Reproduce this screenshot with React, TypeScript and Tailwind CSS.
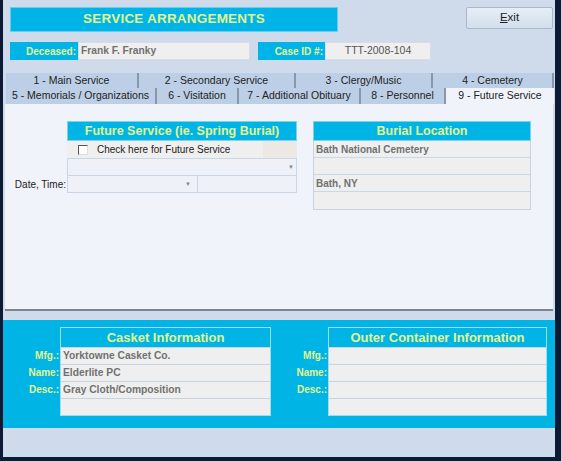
import React from 'react';

const font = { fontFamily: '"Liberation Sans", Arial, sans-serif' };

const topTabs = [
  { label: '1 - Main Service', w: 'w-[133px]' },
  { label: '2 - Secondary Service', w: 'w-[157px]' },
  { label: '3 - Clergy/Music', w: 'w-[137px]' },
  { label: '4 - Cemetery', w: 'w-[121px]' },
];

const bottomTabs = [
  { label: '5 - Memorials / Organizations', w: 'w-[151px]', active: false },
  { label: '6 - Visitation', w: 'w-[82px]', active: false },
  { label: '7 - Additional Obituary', w: 'w-[122px]', active: false },
  { label: '8 -  Personnel', w: 'w-[85px]', active: false },
  { label: '9 - Future Service', w: 'w-[108px]', active: true },
];

function Header({ children }: { children: React.ReactNode }) {
  return (
    <div className="h-[20px] bg-[#00b4e6] flex items-center justify-center text-[12.5px] font-bold text-[#e2f48e] border border-[#7fd2ee]">
      {children}
    </div>
  );
}

function Arrow() {
  return <span className="text-[6px] text-[#888] leading-none">▼</span>;
}

function InfoBox({ title, rows, boxW }: { title: string; rows: string[]; boxW: string }) {
  const labels = ['Mfg.:', 'Name:', 'Desc.:', ''];
  return (
    <div className="flex items-start">
      <div className="w-[57px] flex flex-col pt-[20px]">
        {labels.map((l, i) => (
          <div key={i} className="h-[17px] flex items-center justify-end pr-[1px] text-[10px] font-bold text-[#e2f48e]">
            {l}
          </div>
        ))}
      </div>
      <div className={`${boxW} border border-[#9fdcf2] bg-[#00b4e6]`}>
        <div className="h-[19px] flex items-center justify-center text-[13px] font-bold text-[#e2f48e]">{title}</div>
        {rows.map((r, i) => (
          <div
            key={i}
            className="h-[17px] bg-[#efefef] border-t border-[#c9d3de] flex items-center px-[2px] text-[10.25px] font-bold text-[#717171]"
          >
            {r}
          </div>
        ))}
      </div>
    </div>
  );
}

export default function App() {
  return (
    <div className="w-[561px] h-[461px] bg-[#0d1a33] flex pl-[3px] pr-[6px] pb-[4px] overflow-hidden" style={font}>
      <div className="flex-1 bg-[#cfdbea] flex flex-col">
        {/* title row */}
        <div className="flex pt-[7px] pr-[2px]">
          <div className="ml-[7px] w-[328px] h-[25px] bg-[#00b4e8] border border-[#66cdef] flex items-center justify-center text-[13.5px] font-bold text-[#e2f48e] tracking-[0.2px]">
            SERVICE ARRANGEMENTS
          </div>
          <button className="ml-auto w-[87px] h-[22px] bg-gradient-to-b from-[#e6eef7] to-[#d3dfec] border border-[#a9b9cb] rounded-[2px] text-[11.5px] text-[#1d1d1d] flex items-center justify-center">
            <span className="underline">E</span>xit
          </button>
        </div>

        {/* deceased row */}
        <div className="flex mt-[10px] h-[18px] items-stretch">
          <div className="ml-[7px] w-[68px] bg-[#00b4e8] flex items-center justify-end pr-[2px] text-[10px] font-bold text-[#e2f48e]">
            Deceased:
          </div>
          <div className="w-[172px] bg-[#efefef] border border-[#d6dde6] flex items-center px-[2px] text-[10.25px] font-bold text-[#717171]">
            Frank F. Franky
          </div>
          <div className="ml-[8px] w-[67px] bg-[#00b4e8] flex items-center justify-end pr-[2px] text-[10px] font-bold text-[#e2f48e]">
            Case ID #:
          </div>
          <div className="w-[106px] bg-[#efefef] border border-[#d6dde6] flex items-center justify-center text-[10.5px] text-[#555]">
            TTT-2008-104
          </div>
        </div>

        {/* tabs */}
        <div className="mt-[13px] ml-[3px] flex flex-col text-[10.5px] text-[#222]">
          <div className="flex h-[15px]">
            {topTabs.map((t) => (
              <div
                key={t.label}
                className={`${t.w} bg-[#bccfe6] border-r-2 border-[#8798ad] flex items-center justify-center`}
              >
                {t.label}
              </div>
            ))}
          </div>
          <div className="flex h-[16px]">
            {bottomTabs.map((t) => (
              <div
                key={t.label}
                className={`${t.w} flex items-center justify-center ${
                  t.active ? 'bg-[#f0f4fa]' : 'bg-[#bccfe6] border-r-2 border-[#8798ad]'
                }`}
              >
                {t.label}
              </div>
            ))}
          </div>
        </div>

        {/* panel */}
        <div className="ml-[2px] w-[548px] h-[207px] bg-[#f0f4fa] border-b-2 border-[#7d848c] flex pt-[17px]">
          <div className="flex">
            <div className="w-[62px] flex flex-col pt-[55px]">
              <div className="h-[17px] flex items-center justify-end pr-[1px] text-[10px] text-[#222]">Date, Time:</div>
            </div>
            <div className="w-[230px] flex flex-col">
              <Header>Future Service (ie. Spring Burial)</Header>
              <div className="h-[18px] bg-[#efefef] border-b border-[#cbd7e4] flex items-center">
                <span className="ml-[11px] w-[10px] h-[10px] bg-white border-t border-l border-[#555] border-r border-b border-r-[#ddd] border-b-[#ddd]"></span>
                <span className="ml-[9px] text-[10px] text-[#222]">Check here for Future Service</span>
                <span className="ml-auto w-[34px] h-full bg-[#ece9e4]"></span>
              </div>
              <div className="h-[17px] bg-[#eef2f8] border border-t-0 border-[#c9d6e6] flex items-center justify-end pr-[2px]">
                <Arrow />
              </div>
              <div className="h-[17px] flex">
                <div className="w-[131px] bg-[#eef2f8] border border-t-0 border-[#c9d6e6] flex items-center justify-end pr-[6px]">
                  <Arrow />
                </div>
                <div className="flex-1 bg-[#eef2f8] border border-t-0 border-l-0 border-[#c9d6e6]"></div>
              </div>
            </div>
          </div>
          <div className="ml-[16px] w-[218px] flex flex-col">
            <Header>Burial Location</Header>
            <div className="border border-t-0 border-[#c9d3de]">
              {['Bath National Cemetery', '', 'Bath, NY', ''].map((v, i) => (
                <div
                  key={i}
                  className={`h-[17px] bg-[#efefef] ${i < 3 ? 'border-b border-[#cbd7e4]' : ''} flex items-center px-[2px] text-[10px] font-bold text-[#717171]`}
                >
                  {v}
                </div>
              ))}
            </div>
          </div>
        </div>

        {/* bottom info */}
        <div className="mt-[9px] h-[108px] bg-[#00b4e6] flex items-start pt-[7px]">
          <InfoBox
            title="Casket Information"
            rows={['Yorktowne Casket Co.', 'Elderlite PC', 'Gray Cloth/Composition', '']}
            boxW="w-[211px]"
          />
          <InfoBox title="Outer Container Information" rows={['', '', '', '']} boxW="w-[219px]" />
        </div>
      </div>
    </div>
  );
}
